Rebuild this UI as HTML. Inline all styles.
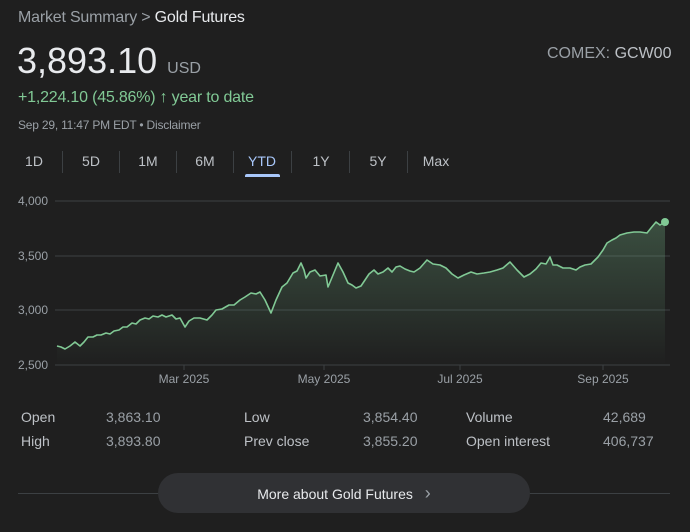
<!DOCTYPE html>
<html><head><style>
body{margin:0;width:690px;height:532px;background:#1f1f1f;font-family:"Liberation Sans",sans-serif;position:relative;overflow:hidden}
.a{position:absolute;white-space:nowrap}
.tab{position:absolute;top:153px;font-size:14px;color:#bdc1c6;transform:translateX(-50%)}
.sep{position:absolute;top:151px;width:1px;height:22px;background:#3c4043}
.s{position:absolute;font-size:14px}
.l{color:#bdc1c6}.v{color:#9aa0a6}
</style></head><body>
<div class="a" style="left:18px;top:9px;font-size:16px;color:#9aa0a6;letter-spacing:-0.2px">Market Summary &gt; <span style="color:#e8eaed">Gold Futures</span></div>
<div class="a" style="left:17px;top:40px;font-size:36px;color:#e8eaed">3,893.10 <span style="font-size:16px;color:#9aa0a6">USD</span></div>
<div class="a" style="left:547px;top:45px;font-size:16px;color:#9aa0a6">COMEX: <span style="color:#bdc1c6">GCW00</span></div>
<div class="a" style="left:18px;top:89px;font-size:16px;color:#81c995;letter-spacing:-0.2px">+1,224.10 (45.86%) ↑ year to date</div>
<div class="a" style="left:18px;top:118px;font-size:12px;color:#9aa0a6;letter-spacing:-0.2px">Sep 29, 11:47 PM EDT • Disclaimer</div>
<div class="tab" style="left:34px">1D</div><div class="sep" style="left:62px"></div>
<div class="tab" style="left:91px">5D</div><div class="sep" style="left:119px"></div>
<div class="tab" style="left:148px">1M</div><div class="sep" style="left:176px"></div>
<div class="tab" style="left:205px">6M</div><div class="sep" style="left:233px"></div>
<div class="tab" style="left:262px;color:#a8c7fa">YTD</div><div class="sep" style="left:291px"></div>
<div class="tab" style="left:321px">1Y</div><div class="sep" style="left:349px"></div>
<div class="tab" style="left:378px">5Y</div><div class="sep" style="left:407px"></div>
<div class="tab" style="left:436px">Max</div>
<div class="a" style="left:245px;top:174px;width:35px;height:3px;border-radius:2px 2px 0 0;background:#a8c7fa"></div>
<svg class="a" style="left:0;top:190px" width="690" height="210" viewBox="0 190 690 210">
<defs><linearGradient id="g" x1="0" y1="0" x2="0" y2="1"><stop offset="0" stop-color="#81c995" stop-opacity=".28"/><stop offset="1" stop-color="#81c995" stop-opacity="0"/></linearGradient>
<path id="p" d="M57,346 L61,347 L65,349 L70,346 L75,342 L80,346 L84,342 L88,337 L93,337 L97,335 L101,335 L106,333 L110,334 L114,331 L119,330 L123,327 L127,327 L132,323 L136,324 L140,320 L145,318 L149,319 L153,316 L158,317 L162,315 L166,317 L172,315 L176,319 L180,318 L185,327 L189,321 L194,318 L200,318 L207,320 L212,315 L216,310 L222,309 L229,305 L234,305 L240,300 L245,297 L251,293 L256,294 L260,292 L265,300 L271,313 L276,300 L282,287 L287,283 L293,273 L297,271 L301,263 L304,270 L306,278 L310,272 L315,270 L320,276 L326,275 L328,287 L333,275 L338,263 L343,272 L348,283 L352,285 L356,288 L361,286 L365,280 L369,274 L374,270 L378,274 L383,272 L388,268 L392,272 L396,267 L400,266 L405,269 L410,271 L414,272 L420,268 L427,260 L433,264 L440,265 L446,268 L452,274 L458,278 L464,275 L471,272 L477,274 L484,273 L490,272 L497,270 L503,268 L510,262 L517,270 L524,277 L530,274 L536,269 L541,263 L546,264 L550,257 L553,265 L557,265 L563,268 L570,268 L576,270 L580,267 L585,265 L591,264 L598,257 L603,250 L607,243 L612,240 L616,238 L620,235 L627,233 L634,232 L640,232 L647,233 L651,228 L656,222 L660,225 L665,222"/></defs>
<g stroke="#3c4043" stroke-width="1"><line x1="55" y1="201" x2="670" y2="201"/><line x1="55" y1="256" x2="670" y2="256"/><line x1="55" y1="310" x2="670" y2="310"/><line x1="55" y1="365" x2="670" y2="365"/>
<line x1="184" y1="365" x2="184" y2="370"/><line x1="324" y1="365" x2="324" y2="370"/><line x1="460" y1="365" x2="460" y2="370"/><line x1="603" y1="365" x2="603" y2="370"/></g>
<g font-size="12" fill="#9aa0a6"><text x="18" y="205">4,000</text><text x="18" y="260">3,500</text><text x="18" y="314">3,000</text><text x="18" y="369">2,500</text>
<text x="184" y="383" text-anchor="middle">Mar 2025</text><text x="324" y="383" text-anchor="middle">May 2025</text><text x="460" y="383" text-anchor="middle">Jul 2025</text><text x="603" y="383" text-anchor="middle">Sep 2025</text></g>
<path d="M57,346 L61,347 L65,349 L70,346 L75,342 L80,346 L84,342 L88,337 L93,337 L97,335 L101,335 L106,333 L110,334 L114,331 L119,330 L123,327 L127,327 L132,323 L136,324 L140,320 L145,318 L149,319 L153,316 L158,317 L162,315 L166,317 L172,315 L176,319 L180,318 L185,327 L189,321 L194,318 L200,318 L207,320 L212,315 L216,310 L222,309 L229,305 L234,305 L240,300 L245,297 L251,293 L256,294 L260,292 L265,300 L271,313 L276,300 L282,287 L287,283 L293,273 L297,271 L301,263 L304,270 L306,278 L310,272 L315,270 L320,276 L326,275 L328,287 L333,275 L338,263 L343,272 L348,283 L352,285 L356,288 L361,286 L365,280 L369,274 L374,270 L378,274 L383,272 L388,268 L392,272 L396,267 L400,266 L405,269 L410,271 L414,272 L420,268 L427,260 L433,264 L440,265 L446,268 L452,274 L458,278 L464,275 L471,272 L477,274 L484,273 L490,272 L497,270 L503,268 L510,262 L517,270 L524,277 L530,274 L536,269 L541,263 L546,264 L550,257 L553,265 L557,265 L563,268 L570,268 L576,270 L580,267 L585,265 L591,264 L598,257 L603,250 L607,243 L612,240 L616,238 L620,235 L627,233 L634,232 L640,232 L647,233 L651,228 L656,222 L660,225 L665,222 L665,365 L57,365Z" fill="url(#g)"/>
<use href="#p" fill="none" stroke="#81c995" stroke-width="1.6" stroke-linejoin="round"/>
<circle cx="665" cy="222" r="4" fill="#81c995"/>
</svg>
<div class="s l" style="left:21px;top:409px">Open</div><div class="s v" style="left:106px;top:409px">3,863.10</div>
<div class="s l" style="left:21px;top:433px">High</div><div class="s v" style="left:106px;top:433px">3,893.80</div>
<div class="s l" style="left:244px;top:409px">Low</div><div class="s v" style="left:363px;top:409px">3,854.40</div>
<div class="s l" style="left:244px;top:433px">Prev close</div><div class="s v" style="left:363px;top:433px">3,855.20</div>
<div class="s l" style="left:466px;top:409px">Volume</div><div class="s v" style="left:603px;top:409px">42,689</div>
<div class="s l" style="left:466px;top:433px">Open interest</div><div class="s v" style="left:603px;top:433px">406,737</div>
<div class="a" style="left:18px;top:493px;width:652px;height:1px;background:#3c4043"></div>
<div class="a" style="left:158px;top:473px;width:372px;height:40px;border-radius:20px;background:#303134;color:#e8eaed;font-size:14px;line-height:40px;text-align:center">More about Gold Futures <span style="color:#9aa0a6;margin-left:8px;font-size:18px">›</span></div>
</body></html>
